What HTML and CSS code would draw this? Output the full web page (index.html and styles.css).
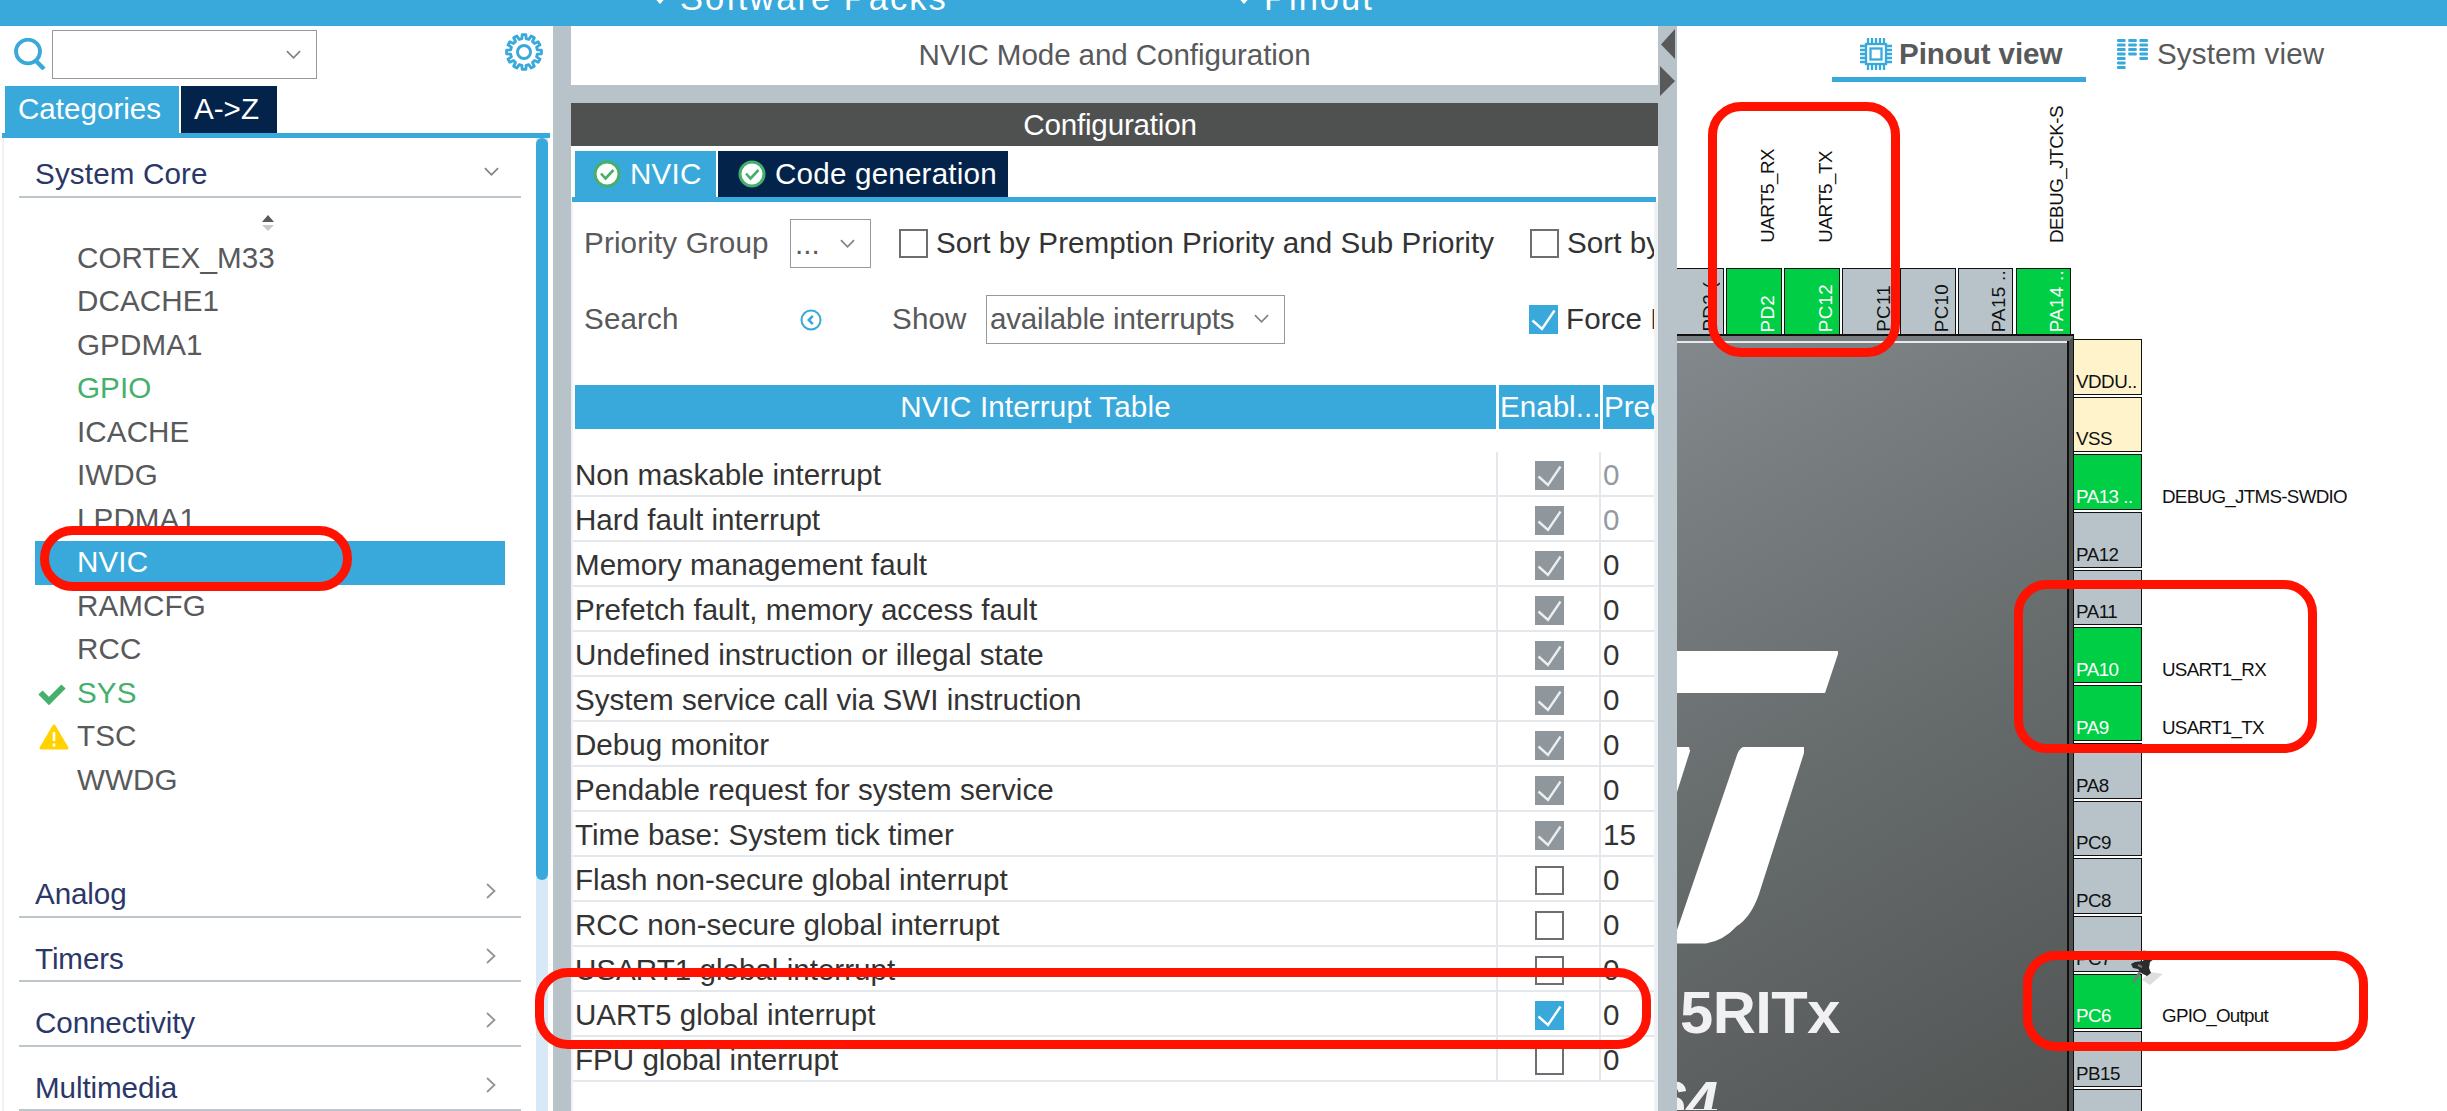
FILE: index.html
```html
<!DOCTYPE html>
<html lang="en">
<head>
    <meta charset="UTF-8">
    <meta name="viewport" content="width=device-width, initial-scale=1.0">
    <title>NVIC Mode and Configuration</title>
    <link rel="stylesheet" href="styles.css">
</head>
<body>

<!-- Shared icons -->
<svg class="defs" width="0" height="0">
    <symbol id="down" viewBox="0 0 16 9"><path d="M1 1 8 8 15 1" fill="none" stroke="#808285" stroke-width="1.8"/></symbol>
    <symbol id="right" viewBox="0 0 10 16"><path d="M1 1 8.500 8 1 15" fill="none" stroke="#939598" stroke-width="1.8"/></symbol>
    <symbol id="ok" viewBox="0 0 28 28">
        <circle cx="14" cy="14" r="12" fill="#fff" stroke="#45b06b" stroke-width="3"/>
        <path d="M8 13.500 12.500 18.500 20.500 10" fill="none" stroke="#45b06b" stroke-width="2.6"/>
    </symbol>
    <symbol id="tick" viewBox="0 0 29 29"><path d="M3.500 15.500 13 24 25.500 5.500" fill="none" stroke="currentColor" stroke-width="2.4"/></symbol>
</svg>

<header class="topbar">
    <span class="menu menu-packs"><i></i>Software Packs</span>
    <span class="menu menu-pinout"><i></i>Pinout</span>
</header>

<main class="workspace">
    <aside class="sidebar">
        <div class="searchbar">
            <svg class="search-icon" viewBox="0 0 32 32"><ellipse cx="14" cy="13.500" rx="12" ry="11.800" fill="none" stroke="#39a9dc" stroke-width="3.800"/><path d="M21.500 22.500 30 31" stroke="#39a9dc" stroke-width="4.400"/></svg>
            <div class="combo search-combo"><svg class="down"><use href="#down"/></svg></div>
            <svg class="gear" viewBox="0 0 36 36" id="gear"></svg>
        </div>
        <div class="tabs side-tabs">
            <div class="tab active">Categories</div>
            <div class="tab">A-&gt;Z</div>
        </div>
        <div class="side-body">
            <div class="tree">
                <div class="section open">System Core<svg class="down"><use href="#down"/></svg></div>
                <div class="sorter"><svg viewBox="0 0 12 17" width="12" height="17"><path d="M0 7 6 0 12 7Z" fill="#58595b"/><path d="M0 10 12 10 6 16Z" fill="#c9cacb"/></svg></div>
                <ul class="items">
                    <li>CORTEX_M33</li>
                    <li>DCACHE1</li>
                    <li>GPDMA1</li>
                    <li class="green">GPIO</li>
                    <li>ICACHE</li>
                    <li>IWDG</li>
                    <li>LPDMA1</li>
                    <li class="selected">NVIC</li>
                    <li>RAMCFG</li>
                    <li>RCC</li>
                    <li class="green"><svg viewBox="0 0 28 22" width="28" height="22"><path d="M2.500 9.500 11 18 25.500 3.500" fill="none" stroke="#45b06b" stroke-width="6"/></svg>SYS</li>
                    <li><svg class="warn" viewBox="0 0 30 26" width="30" height="26"><path d="M15 2 28 24H2Z" fill="#ffd200" stroke="#ffd200" stroke-width="3" stroke-linejoin="round"/><path d="M15 8V17M15 19.500V22.500" stroke="#fff" stroke-width="2.600"/></svg>TSC</li>
                    <li>WWDG</li>
                </ul>
                <div class="section">Analog<svg class="right"><use href="#right"/></svg></div>
                <div class="section">Timers<svg class="right"><use href="#right"/></svg></div>
                <div class="section">Connectivity<svg class="right"><use href="#right"/></svg></div>
                <div class="section">Multimedia<svg class="right"><use href="#right"/></svg></div>
            </div>
            <div class="scroll"><div class="thumb"></div></div>
        </div>
    </aside>

    <div class="divider"></div>

    <section class="config">
        <div class="mode-title">NVIC Mode and Configuration</div>
        <div class="gap"></div>
        <div class="config-title">Configuration</div>
        <div class="tabs config-tabs">
            <div class="tab active"><svg><use href="#ok"/></svg>NVIC</div>
            <div class="tab"><svg><use href="#ok"/></svg>Code generation</div>
        </div>
        <div class="config-body">
            <div class="options">
                <span class="lbl">Priority Group</span>
                <div class="combo group-combo">...<svg class="down"><use href="#down"/></svg></div>
                <span class="box"></span><span class="dark sort-label">Sort by Premption Priority and Sub Priority</span>
                <span class="box"></span><span class="dark">Sort by</span>
            </div>
            <div class="options second">
                <span class="lbl search-lbl">Search</span>
                <svg class="prev" viewBox="0 0 22 22"><circle cx="11" cy="11" r="9.500" fill="none" stroke="#39a9dc" stroke-width="2"/><path d="M12.800 6.800 8.800 11 12.800 15.200" fill="none" stroke="#39a9dc" stroke-width="2.600"/></svg>
                <span class="lbl show-lbl">Show</span>
                <div class="combo show-combo">available interrupts<svg class="down"><use href="#down"/></svg></div>
                <span class="box checked"><svg><use href="#tick"/></svg></span><span class="dark">Force DMA</span>
            </div>
            <div class="table-head">
                <div>NVIC Interrupt Table</div>
                <div class="left">Enabl...</div>
                <div class="left">Pree</div>
            </div>
            <div class="table-rows" id="rows"></div>
        </div>
    </section>

    <div class="divider wide">
        <svg viewBox="0 0 18 72" width="18" height="72"><path d="M17 3 3 18.500 17 33Z M2 40V70L17 55Z" fill="#58595b"/></svg>
    </div>

    <section class="pinout">
        <nav class="views">
            <div class="view current"><svg class="chip-icon" viewBox="0 0 32 34" id="chipIcon"></svg>Pinout view</div>
            <div class="view"><svg class="sys-icon" viewBox="0 0 31 31" id="sysIcon"></svg>System view</div>
        </nav>
        <div class="canvas">
            <div class="top-labels" id="topLabels"></div>
            <div class="top-pins" id="topPins"></div>
            <div class="chip-row">
                <div class="chip">
                    <svg viewBox="1677 342 391 769" width="391" height="769">
                        <g fill="#fff">
                            <path d="M1677 652H1838L1838 655 1825 694H1677Z"/>
                            <path d="M1677 748H1689L1690 752 1677 793Z"/>
                            <path d="M1743 748H1804V754L1759 895Q1751 918 1737 927 1723 942 1706 944.500H1677V931L1737 756Q1739 750 1743 748Z"/>
                        </g>
                        <text class="part" x="1680" y="1034" textLength="160" lengthAdjust="spacingAndGlyphs">5RITx</text>
                        <text class="package" x="1653" y="1124">64</text>
                    </svg>
                </div>
                <div class="right-pins" id="rightPins"></div>
            </div>
        </div>
    </section>
</main>

<!-- Highlights laid over the whole window -->
<div class="mark mark-nvic"></div>
<div class="mark mark-uart-irq"></div>
<div class="mark mark-uart-pins"></div>
<div class="mark mark-usart-pins"></div>
<svg class="pushpin" viewBox="0 0 34 40">
    <path d="M12 32 19 24 27 25 33 26 27 31 20 37Z" fill="#000" opacity=".13"/>
    <path d="M3.500 34 10 24" stroke="#77797b" stroke-width="2.800"/>
    <path d="M1 16 5 14 13 13 15 9 13 3 22 5 24 11 20 14 19 20 21 25 17 28 11 25 8 21 3 20Z" fill="#2b2c2d"/>
    <path d="M13 2 21 4 24 9 18 9Z" fill="#9a9c9e"/>
    <path d="M8 17 12 19" stroke="#77797b" stroke-width="2"/>
</svg>
<div class="mark mark-gpio"></div>

<script>
    const interrupts = [
        ["Non maskable interrupt", "locked", "0", true],
        ["Hard fault interrupt", "locked", "0", true],
        ["Memory management fault", "locked", "0"],
        ["Prefetch fault, memory access fault", "locked", "0"],
        ["Undefined instruction or illegal state", "locked", "0"],
        ["System service call via SWI instruction", "locked", "0"],
        ["Debug monitor", "locked", "0"],
        ["Pendable request for system service", "locked", "0"],
        ["Time base: System tick timer", "locked", "15"],
        ["Flash non-secure global interrupt", "", "0"],
        ["RCC non-secure global interrupt", "", "0"],
        ["USART1 global interrupt", "", "0"],
        ["UART5 global interrupt", "checked", "0"],
        ["FPU global interrupt", "", "0"]
    ];
    const tick = '<svg><use href="#tick"/></svg>';
    document.getElementById('rows').innerHTML = interrupts.map(([name, state, prio, dim]) => `
        <div class="row">
            <div>${name}</div>
            <div class="enable"><span class="box ${state}">${state ? tick : ''}</span></div>
            <div class="${dim ? 'dim' : ''}">${prio}</div>
        </div>`).join('');

    const topPins = [
        ["PD3 (..", "", ""],
        ["PD2", "used", "UART5_RX"],
        ["PC12", "used", "UART5_TX"],
        ["PC11", "", ""],
        ["PC10", "", ""],
        ["PA15 ..", "", ""],
        ["PA14 ..", "used", "DEBUG_JTCK-S"]
    ];
    document.getElementById('topLabels').innerHTML = topPins.map(p => `<div><span>${p[2]}</span></div>`).join('');
    document.getElementById('topPins').innerHTML = topPins.map(p => `<div class="${p[1]}"><span>${p[0]}</span></div>`).join('');

    const rightPins = [
        ["VDDU..", "power", ""],
        ["VSS", "power", ""],
        ["PA13 ..", "used", "DEBUG_JTMS-SWDIO"],
        ["PA12", "", ""],
        ["PA11", "", ""],
        ["PA10", "used", "USART1_RX"],
        ["PA9", "used", "USART1_TX"],
        ["PA8", "", ""],
        ["PC9", "", ""],
        ["PC8", "", ""],
        ["PC7", "", ""],
        ["PC6", "used", "GPIO_Output"],
        ["PB15", "", ""],
        ["", "", ""]
    ];
    document.getElementById('rightPins').innerHTML = rightPins.map(p =>
        `<div class="pin-line"><div class="pin ${p[1]}">${p[0]}</div><span>${p[2]}</span></div>`).join('');

    // gear outline, 12 teeth
    let gear = '';
    for (let i = 0; i < 12; i++) {
        [[-9, 12.8], [-6, 16.6], [6, 16.6], [9, 12.8]].forEach(([off, r]) => {
            const a = (i * 30 + off) * Math.PI / 180;
            gear += (gear ? 'L' : 'M') + (18 + r * Math.sin(a)).toFixed(2) + ' ' + (18 - r * Math.cos(a)).toFixed(2);
        });
    }
    document.getElementById('gear').innerHTML =
        `<g fill="none" stroke="#39a9dc" stroke-width="2.7" stroke-linejoin="round"><path d="${gear}Z"/><circle cx="18" cy="18" r="6.2"/></g>`;

    // chip icon legs
    let legs = '';
    for (let i = 0; i < 5; i++) {
        const x = 8 + i * 4, y = 9 + i * 4;
        legs += `M${x} 1V7M${x} 27V33M0 ${y}H6M26 ${y}H32`;
    }
    document.getElementById('chipIcon').innerHTML =
        `<g fill="none" stroke="#39a9dc" stroke-width="2.3"><path d="${legs}"/><rect x="6" y="7" width="20" height="20"/><rect x="10.500" y="11.500" width="11" height="11"/></g>`;

    // system view columns
    const heights = [7, 4, 5];
    document.getElementById('sysIcon').innerHTML = heights.map((n, c) =>
        Array.from({ length: n }, (_, r) => `<rect x="${c * 11.2}" y="${r * 4.5}" width="8.6" height="3" rx="1" fill="#39a9dc"/>`).join('')).join('');
</script>

</body>
</html>
```
FILE: styles.css
```css
* {
    box-sizing: border-box;
}
body {
    margin: 0;
    width: 2447px;
    height: 1111px;
    overflow: hidden;
    position: relative;
    background: #fff;
    font-family: "Liberation Sans", Arial, sans-serif;
    font-size: 29.6px;
    color: #58595b;
    white-space: nowrap;
}
svg {
    display: block;
    flex: none;
}
.defs {
    position: absolute;
}
.topbar {
    height: 26px;
    background: #39a9dc;
    color: #fff;
    font-size: 34.500px;
    display: flex;
    padding-left: 656px;
    overflow: hidden;
}
.menu {
    display: flex;
    line-height: 40px;
    margin-top: -22px;
    letter-spacing: 2px;
}
.menu i {
    width: 8px;
    height: 8px;
    margin: 16px 16px 0 0;
    border: solid #fff;
    border-width: 0 3px 3px 0;
    transform: rotate(45deg);
}
.menu-packs {
    width: 584px;
}
.workspace {
    display: flex;
    height: 1085px;
}
.down {
    width: 15px;
    height: 9px;
}
.right {
    width: 10px;
    height: 16px;
}
.combo {
    height: 49px;
    border: 1.500px solid #939ba1;
    display: flex;
    align-items: center;
    justify-content: space-between;
    flex: none;
}

/* Left panel */
.sidebar {
    width: 553px;
    flex: none;
    display: flex;
    flex-direction: column;
    padding-left: 2px;
}
.searchbar {
    display: flex;
    height: 60px;
    padding: 4px 0 0 12px;
}
.search-icon {
    width: 32px;
    height: 32px;
    margin-top: 8px;
}
.search-combo {
    width: 265px;
    margin-left: 6px;
    padding: 0 15px;
    justify-content: flex-end;
}
.gear {
    width: 38px;
    height: 38px;
    margin: 3px 0 0 188px;
}
.tabs {
    display: flex;
    gap: 2px;
    border-bottom: 5px solid #39a9dc;
}
.tab {
    background: #03234b;
    color: #fff;
    display: flex;
    align-items: center;
}
.tab.active {
    background: #39a9dc;
}
.side-tabs {
    height: 52px;
    padding-left: 3px;
    margin-right: 3px;
}
.side-tabs .tab {
    padding: 0 0 2px 13px;
    width: 96px;
}
.side-tabs .active {
    width: 174px;
}
.side-body {
    flex: 1;
    display: flex;
    border-left: 2px solid #eff1f5;
    min-height: 0;
    overflow: hidden;
}
.tree {
    width: 532px;
    padding: 0 15px 0 15px;
    flex: none;
}
.section {
    height: 64.600px;
    border-bottom: 2px solid #bcc6cb;
    color: #2b3768;
    display: flex;
    align-items: center;
    justify-content: space-between;
    padding: 20px 25px 0 16px;
    letter-spacing: -0.100px;
}
.section svg {
    margin-top: -6px;
}
.section.open {
    height: 60px;
    padding: 14px 22px 0 16px;
    letter-spacing: 0.150px;
}
.section.open svg {
    margin-top: -6px;
}
.sorter {
    height: 38.500px;
    padding: 17px 0 0 243px;
}
.items {
    list-style: none;
    margin: 0 16px 51px 16px;
    padding: 0;
}
.items li {
    height: 43.500px;
    padding-left: 42px;
    line-height: 42px;
    position: relative;
    letter-spacing: 0.100px;
}
.items svg {
    position: absolute;
    left: 3px;
    top: 11px;
}
.items .warn {
    left: 4px;
    top: 9px;
}
.green {
    color: #45b06b;
}
.selected {
    background: #39a9dc;
    color: #fff;
}
.scroll {
    width: 12px;
    background: #d9e8f5;
}
.thumb {
    height: 742px;
    background: #39a9dc;
    border-radius: 6px;
}
.divider {
    width: 18px;
    background: #b8c3c9;
    flex: none;
}
.wide {
    width: 19px;
}

/* Configuration panel */
.config {
    width: 1087px;
    flex: none;
    display: flex;
    flex-direction: column;
}
.mode-title {
    height: 59px;
    line-height: 58px;
    text-align: center;
    letter-spacing: -0.100px;
}
.gap {
    height: 18px;
    background: #b8c3c9;
}
.config-title {
    height: 43px;
    line-height: 43px;
    text-align: center;
    background: #4e5150;
    color: #fff;
    padding-right: 9px;
    letter-spacing: -0.200px;
}
.config-tabs {
    margin: 5px 2px 0 1px;
    height: 51px;
    padding-left: 3px;
}
.config-tabs .tab {
    width: 290px;
    padding: 0 0 1px 20px;
    letter-spacing: 0.200px;
}
.config-tabs .active {
    width: 141px;
    padding-left: 18px;
}
.config-tabs svg {
    width: 28px;
    height: 28px;
    margin-right: 9px;
}
.config-body {
    flex: 1;
    border: solid #eff1f5;
    border-width: 0 4px 0 2px;
    overflow: hidden;
    padding-left: 2px;
}
.options {
    display: flex;
    align-items: center;
    height: 49px;
    margin-top: 17px;
    padding-left: 8px;
}
.options.second {
    margin-top: 27px;
}
.lbl {
    width: 207px;
    flex: none;
    padding: 0 0 2px 1px;
    letter-spacing: 0.150px;
}
.dark {
    color: #333;
    padding-bottom: 2px;
    letter-spacing: 0.050px;
}
.group-combo {
    width: 81px;
    padding: 0 15px 0 4px;
    margin-right: 28px;
}
.sort-label {
    width: 594px;
    flex: none;
}
.search-lbl {
    width: 217px;
}
.prev {
    width: 22px;
    height: 22px;
    margin-right: 69px;
}
.show-lbl {
    width: 95px;
}
.show-combo {
    width: 299px;
    padding: 0 15px 2px 3px;
    margin-right: 244px;
    letter-spacing: -0.200px;
}
.box {
    width: 29px;
    height: 29px;
    border: 2px solid #6d6e70;
    background: #fff;
    flex: none;
    color: #fff;
    display: block;
}
.options .box {
    margin-right: 8px;
}
.box svg {
    width: 29px;
    height: 29px;
}
.checked {
    background: #39a9dc;
    border: 0;
}
.locked {
    background: #8f979d;
    border: 0;
    color: #eceeef;
}
.table-head {
    display: grid;
    grid-template-columns: 921px 101px 100px;
    gap: 3px;
    margin: 41px 0 23px;
    color: #fff;
    letter-spacing: 0.150px;
}
.table-head div {
    background: #39a9dc;
    height: 43.500px;
    line-height: 43px;
    text-align: center;
}
.table-head .left {
    text-align: left;
    padding-left: 1px;
    letter-spacing: 0;
}
.row {
    display: grid;
    grid-template-columns: 925px 103px 52px;
    height: 45px;
    line-height: 45px;
    margin-left: -2px;
    color: #333;
    border-bottom: 2px solid #e4e7eb;
}
.row div {
    padding-left: 2px;
    border-right: 2px solid #e4e7eb;
}
.row div:last-child {
    border: 0;
}
.row .enable {
    padding: 9px 0 0 37px;
}
.row .dim {
    color: #939aa3;
}

/* Pinout view */
.pinout {
    width: 770px;
    flex: none;
    overflow: hidden;
}
.views {
    display: flex;
    height: 56px;
    padding-left: 155px;
    gap: 3px;
}
.view {
    display: flex;
    align-items: center;
    width: 254px;
    padding: 0 0 0 28px;
    letter-spacing: 0.100px;
}
.current {
    font-weight: bold;
    border-bottom: 5px solid #39a9dc;
    padding-top: 5px;
    letter-spacing: -0.100px;
}
.chip-icon {
    width: 32px;
    height: 34px;
    margin-right: 7px;
}
.sys-icon {
    width: 31px;
    height: 31px;
    margin-right: 9px;
}
.canvas {
    font-size: 18.800px;
    letter-spacing: -0.500px;
    color: #111;
}
.top-labels, .top-pins {
    display: grid;
    grid-template-columns: 47px repeat(6, 55.500px);
    gap: 2.400px;
}
.top-labels {
    height: 186px;
    padding-bottom: 25px;
}
.top-labels div, .top-pins div {
    display: flex;
    justify-content: flex-end;
    align-items: flex-end;
    padding-right: 3px;
}
.top-labels span, .top-pins span {
    writing-mode: vertical-rl;
    transform: rotate(180deg);
    line-height: 22px;
}
.top-pins {
    height: 68px;
}
.top-pins div {
    background: #b8c3c9;
    border: 1.500px solid #111;
    border-bottom: 0;
    padding: 0 2px 4px 0;
    letter-spacing: 0.300px;
}
.top-pins div:first-child {
    border-left: 0;
}
.top-pins .used, .pin.used {
    background: #00cf45;
    color: #fff;
}
.chip-row {
    display: flex;
}
/* dark bevel along the top and right edges of the package */
.chip {
    width: 397px;
    height: 775px;
    border: solid #4d5151;
    border-width: 5px 5px 0 0;
    border-top-color: #777c7f;
    background: linear-gradient(150deg, #82888b, #666b6c 52%, #525554);
    box-shadow: inset -2px 0 0 #111, inset 0 2px 0 #e8e9ea, 0 -2px 0 #111;
    flex: none;
    overflow: hidden;
}
.part {
    font-size: 59px;
    font-weight: bold;
    fill: #f1f1f4;
}
.package {
    font-size: 59px;
    font-weight: bold;
    font-style: italic;
    fill: #f1f1f4;
}
.right-pins {
    display: flex;
    flex-direction: column;
    gap: 2px;
    padding-top: 3px;
    height: 775px;
    overflow: hidden;
    border-left: 1px solid #111;
    margin-left: -1px;
}
.pin-line {
    display: flex;
    align-items: flex-end;
    height: 55.700px;
    flex: none;
    line-height: 22px;
}
.pin-line span {
    padding: 0 0 2px 20px;
    letter-spacing: -0.700px;
}
.pin {
    width: 68px;
    height: 100%;
    background: #b8c3c9;
    border: 1.500px solid #111;
    border-left: 0;
    display: flex;
    align-items: flex-end;
    padding: 0 0 1px 2px;
}
.pin.power {
    background: #fff3cb;
}

/* Red highlights */
.mark {
    position: absolute;
    border: 9px solid #ff1200;
    border-radius: 33px;
}
.mark-nvic {
    left: 40px;
    top: 526px;
    width: 312px;
    height: 65px;
}
.mark-uart-irq {
    left: 535px;
    top: 968px;
    width: 1116px;
    height: 81px;
}
.mark-uart-pins {
    left: 1708px;
    top: 102px;
    width: 192px;
    height: 255px;
}
.mark-usart-pins {
    left: 2014px;
    top: 580px;
    width: 303px;
    height: 173px;
}
.mark-gpio {
    left: 2023px;
    top: 951px;
    width: 345px;
    height: 100px;
}
.pushpin {
    position: absolute;
    left: 2130px;
    top: 948px;
    width: 34px;
    height: 40px;
}
```
